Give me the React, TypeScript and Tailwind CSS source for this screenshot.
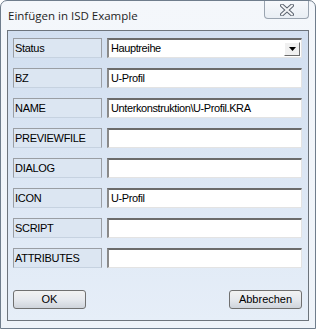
import React from 'react'

const rows = [
  { name: 'Status', value: 'Hauptreihe', combo: true },
  { name: 'BZ', value: 'U-Profil' },
  { name: 'NAME', value: 'Unterkonstruktion\\U-Profil.KRA' },
  { name: 'PREVIEWFILE', value: '' },
  { name: 'DIALOG', value: '' },
  { name: 'ICON', value: 'U-Profil' },
  { name: 'SCRIPT', value: '' },
  { name: 'ATTRIBUTES', value: '' },
]

const ui = { fontFamily: 'Tahoma, "Liberation Sans", Arial, sans-serif' }

function Field({ value, combo }: { value: string; combo?: boolean }) {
  return (
    <div className="flex h-[20px] w-[195px] items-center border-t-2 border-l-2 border-r border-b border-t-[#6b6b6b] border-l-[#8a8a8a] border-r-[#e3e3e3] border-b-[#e3e3e3] bg-white">
      <span className="flex-1 pl-[2px] text-[11px] leading-none tracking-[-0.4px] text-black">{value}</span>
      {combo && (
        <div className="mr-[1px] flex h-[14px] w-[16px] items-center justify-center border border-t-[#fff] border-l-[#fff] border-r-[#6b6b6b] border-b-[#6b6b6b] bg-[#f0f0f0]">
          <svg width="7" height="4" viewBox="0 0 7 4">
            <path d="M0 0h7L3.5 4z" fill="#000" />
          </svg>
        </div>
      )}
    </div>
  )
}

function Button({ label }: { label: string }) {
  return (
    <button className="flex h-[19px] w-[73px] items-center justify-center rounded-[3px] border border-[#707070] bg-gradient-to-b from-[#f2f2f2] via-[#e6e9ee] to-[#cfd4db] text-[11px] leading-none text-black">
      {label}
    </button>
  )
}

export default function App() {
  return (
    <div className="h-[329px] w-[316px] overflow-hidden rounded-t-[7px] border border-[#6f7d8c] bg-gradient-to-b from-[#f4f7fb] to-[#eef3f9]" style={ui}>
      <div className="flex h-[29px] items-start justify-between">
        <span
          className="pl-[7px] pt-[6px] text-[11.5px] text-[#1e1e1e]"
          style={{ fontFamily: '"Open Sans", "Noto Sans", sans-serif' }}
        >
          Einfügen in ISD Example
        </span>
        <div className="mr-[6px] flex h-[18px] w-[45px] items-center justify-center rounded-b-[4px] border border-t-0 border-[#9aa4b0] bg-gradient-to-b from-[#f7f9fc] to-[#e9eef4]">
          <svg width="14" height="12" viewBox="0 0 14 12">
            <path d="M2 1.5L12 10.5M12 1.5L2 10.5" stroke="#5c6470" strokeWidth="4" strokeLinecap="round" />
            <path d="M2 1.5L12 10.5M12 1.5L2 10.5" stroke="#f3f4f6" strokeWidth="2" strokeLinecap="round" />
          </svg>
        </div>
      </div>
      <div className="mx-[6px] flex h-[291px] flex-col border border-[#6d747c] bg-gradient-to-b from-[#d2dff0] to-[#e6eef8] pl-[5px] pr-[6px] pt-[7px]">
        <div className="flex flex-col gap-[10px]">
          {rows.map((row) => (
            <div key={row.name} className="flex gap-[5px]">
              <div className="flex h-[20px] w-[89px] items-center border border-[#9a9ea4] border-b-[#c6d2e0] bg-[#dce6f2] pl-px text-[11px] leading-none tracking-[-0.3px] text-black">
                {row.name}
              </div>
              <Field value={row.value} combo={row.combo} />
            </div>
          ))}
        </div>
        <div className="mt-[22px] flex justify-between">
          <Button label="OK" />
          <Button label="Abbrechen" />
        </div>
      </div>
    </div>
  )
}
